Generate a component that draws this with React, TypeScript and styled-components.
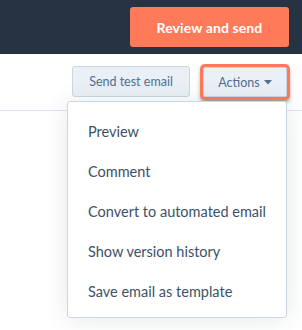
import styled, { createGlobalStyle } from "styled-components";

const GlobalStyle = createGlobalStyle`
  html, body {
    margin: 0;
    padding: 0;
    background: #ffffff;
    font-family: "Lato", "Open Sans", sans-serif;
  }
`;

const menuItems = [
  "Preview",
  "Comment",
  "Convert to automated email",
  "Show version history",
  "Save email as template",
];

export default function App() {
  return (
    <>
      <GlobalStyle />
      <Page>
        <TopBar>
          <PrimaryButton>Review and send</PrimaryButton>
        </TopBar>
        <Toolbar>
          <SecondaryButton>Send test email</SecondaryButton>
          <ActionsWrap>
            <ActionsButton>
              Actions
              <Caret viewBox="0 0 8 5" aria-hidden="true">
                <path d="M0 0 L8 0 L4 4.5 Z" fill="#516f90" />
              </Caret>
            </ActionsButton>
            <Menu>
              {menuItems.map((item) => (
                <MenuItem key={item}>{item}</MenuItem>
              ))}
            </Menu>
          </ActionsWrap>
        </Toolbar>
      </Page>
    </>
  );
}

const Page = styled.div`
  width: 302px;
  height: 330px;
  overflow: hidden;
  position: relative;
`;

const TopBar = styled.header`
  height: 54px;
  background: #253342;
  display: flex;
  justify-content: flex-end;
  align-items: flex-start;
  padding: 7px 13px 0 0;
  box-sizing: border-box;
`;

const PrimaryButton = styled.button`
  width: 159px;
  height: 40px;
  border: none;
  border-radius: 3px;
  background: #ff7a59;
  color: #ffffff;
  font-family: inherit;
  font-size: 14px;
  font-weight: 700;
  letter-spacing: 0.1px;
  padding: 0;
`;

const Toolbar = styled.div`
  height: 57px;
  border-bottom: 1px solid #dfe3eb;
  box-sizing: border-box;
  display: flex;
  justify-content: flex-end;
  align-items: flex-start;
  gap: 13px;
  padding: 12px 15px 0 0;
`;

const SecondaryButton = styled.button`
  width: 118px;
  height: 31px;
  box-sizing: border-box;
  border: 1px solid #cbd6e2;
  border-radius: 3px;
  background: #eaf0f6;
  color: #516f90;
  font-family: inherit;
  font-size: 12.5px;
  padding: 0;
`;

const ActionsWrap = styled.div`
  position: relative;
`;

const ActionsButton = styled(SecondaryButton)`
  width: 84px;
  margin-top: 1px;
  height: 30px;
  display: flex;
  align-items: center;
  justify-content: center;
  gap: 4px;
  border-radius: 2px;
  box-shadow: 0 0 0 3px #ff7a59, 0 3px 4px 2px rgba(40, 40, 40, 0.55);
`;

const Caret = styled.svg`
  width: 8px;
  height: 5px;
  margin-top: 1px;
`;

const Menu = styled.ul`
  position: absolute;
  top: 35px;
  right: 0;
  width: 220px;
  height: 217px;
  margin: 0;
  padding: 9px 0 0 0;
  box-sizing: border-box;
  list-style: none;
  background: #ffffff;
  border: 1px solid #cbd6e2;
  border-radius: 3px;
  box-shadow: 0 1px 24px rgba(45, 62, 80, 0.12);
`;

const MenuItem = styled.li`
  height: 40px;
  display: flex;
  align-items: center;
  padding-left: 20px;
  color: #3d5166;
  font-size: 14.5px;
`;
